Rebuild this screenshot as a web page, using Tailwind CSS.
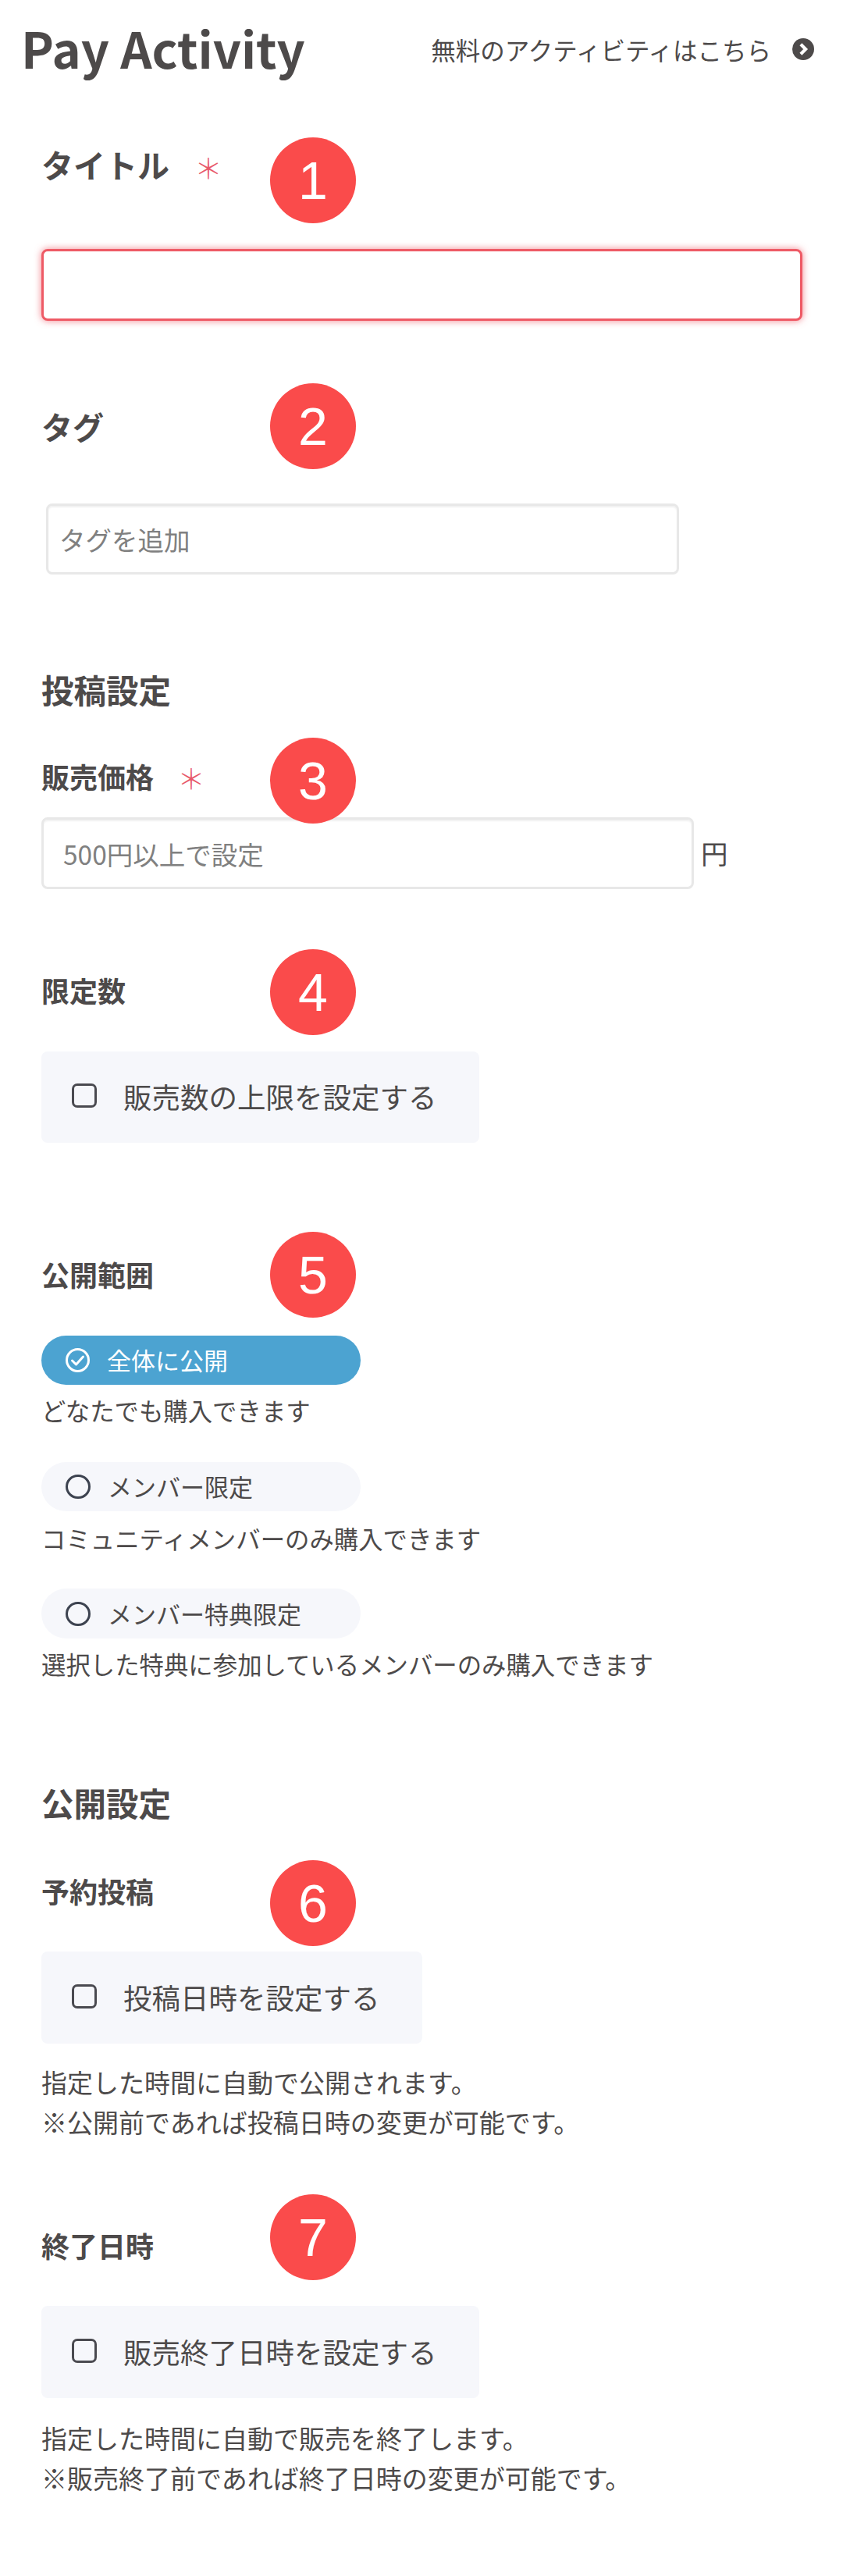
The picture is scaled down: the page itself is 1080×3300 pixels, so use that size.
<!DOCTYPE html>
<html lang="ja">
<head>
  <meta charset="UTF-8" />
  <meta name="viewport" content="width=device-width, initial-scale=1" />
  <title>Pay Activity</title>
  <script src="https://cdn.jsdelivr.net/npm/@tailwindcss/browser@4"></script>
</head>
<body class="bg-white font-['Noto_Sans_CJK_JP','Noto_Sans',sans-serif] text-[#4d4a4a]">
  <div class="w-[1080px] h-[3300px] overflow-hidden">
    <!-- header -->
    <header class="flex justify-between items-start pt-[27px] pl-[27px] pr-[37px] h-[100px]">
      <h1 class="text-[63px] leading-[68px] font-bold">Pay Activity</h1>
      <a href="#" class="flex items-center mt-[14px] text-[31.5px] leading-[44px] font-normal">
        無料のアクティビティはこちら
        <svg class="w-[28px] h-[28px] ml-[27px]" viewBox="0 0 27 27">
          <circle cx="13.5" cy="13.5" r="13.5" fill="#4d4a4a" />
          <path d="M10.5 7.5l6 6-6 6" fill="none" stroke="#fff" stroke-width="4" />
        </svg>
      </a>
    </header>

    <main class="px-[53px]">
      <!-- title -->
      <div class="relative mt-[85px] h-[50px] flex items-center text-[41px] leading-[50px] font-bold">
        タイトル
        <span class="ml-[32px] translate-y-[4px] text-[#e8596a] text-[36px] font-light">＊</span>
        <span class="absolute left-[293px] top-[-9px] z-10 flex items-center justify-center w-[110px] h-[110px] rounded-full bg-[#fa4b4b] text-white text-[68px] font-['Liberation_Sans',sans-serif] font-normal">1</span>
      </div>
      <input class="block mt-[84px] w-[975px] h-[92px] rounded-[8px] border-[3px] border-[#ee5a65] bg-white shadow-[0_0_10px_rgba(238,90,101,0.75)] outline-none" />

      <!-- tag -->
      <div class="relative mt-[110px] h-[50px] flex items-center text-[40px] leading-[50px] font-bold">
        タグ
        <span class="absolute left-[293px] top-[-30px] z-10 flex items-center justify-center w-[110px] h-[110px] rounded-full bg-[#fa4b4b] text-white text-[68px] font-['Liberation_Sans',sans-serif] font-normal">2</span>
      </div>
      <input placeholder="タグを追加" class="block mt-[74px] ml-[6px] w-[811px] h-[91px] px-[14px] rounded-[8px] border-[3px] border-[#e8e8e8] bg-white text-[33.5px] font-normal placeholder:text-[#808080] shadow-[inset_0_2px_2px_rgba(0,0,0,0.06)] outline-none" />

      <!-- post settings -->
      <h2 class="mt-[122px] h-[50px] text-[41.5px] leading-[50px] font-bold">投稿設定</h2>

      <div class="relative mt-[61px] h-[50px] flex items-center text-[36px] leading-[50px] font-bold">
        販売価格
        <span class="ml-[30px] translate-y-[2px] text-[#e8596a] text-[36px] font-light">＊</span>
        <span class="absolute left-[293px] top-[-24px] z-10 flex items-center justify-center w-[110px] h-[110px] rounded-full bg-[#fa4b4b] text-white text-[68px] font-['Liberation_Sans',sans-serif] font-normal">3</span>
      </div>
      <div class="mt-[28px] flex items-center">
        <input placeholder="500円以上で設定" class="block w-[836px] h-[92px] px-[25px] rounded-[8px] border-[3px] border-[#e8e8e8] bg-white text-[33.5px] font-normal placeholder:text-[#808080] shadow-[inset_0_2px_2px_rgba(0,0,0,0.06)] outline-none" />
        <span class="ml-[9px] text-[34.5px] font-normal">円</span>
      </div>

      <div class="relative mt-[104px] h-[50px] flex items-center text-[36px] leading-[50px] font-bold">
        限定数
        <span class="absolute left-[293px] top-[-27px] z-10 flex items-center justify-center w-[110px] h-[110px] rounded-full bg-[#fa4b4b] text-white text-[68px] font-['Liberation_Sans',sans-serif] font-normal">4</span>
      </div>
      <label class="mt-[54px] flex items-center w-[561px] h-[117px] pl-[39px] rounded-[8px] bg-[#f6f7fb]">
        <span class="w-[32px] h-[31px] rounded-[7px] border-[3px] border-[#4a4a50] -translate-y-[2px]"></span>
        <span class="ml-[34px] text-[36.5px] font-normal">販売数の上限を設定する</span>
      </label>

      <!-- visibility -->
      <div class="relative mt-[143px] h-[50px] flex items-center text-[36px] leading-[50px] font-bold">
        公開範囲
        <span class="absolute left-[293px] top-[-29px] z-10 flex items-center justify-center w-[110px] h-[110px] rounded-full bg-[#fa4b4b] text-white text-[68px] font-['Liberation_Sans',sans-serif] font-normal">5</span>
      </div>
      <div class="mt-[54px] flex items-center w-[409px] h-[63px] pl-[31px] rounded-full bg-[#4ca3d1] text-white text-[31px] font-normal">
        <svg class="w-[31px] h-[31px]" viewBox="0 0 31 31" fill="none" stroke="#fff" stroke-width="3">
          <circle cx="15.5" cy="15.5" r="14" />
          <path d="M8.5 16l5 5 9-10" stroke-linecap="round" stroke-linejoin="round" />
        </svg>
        <span class="ml-[22px]">全体に公開</span>
      </div>
      <p class="mt-[11px] h-[44px] text-[31.4px] leading-[44px] font-normal">どなたでも購入できます</p>

      <div class="mt-[44px] flex items-center w-[409px] h-[63px] pl-[31px] rounded-full bg-[#f6f7fb] text-[31px] font-normal">
        <span class="w-[32px] h-[31px] rounded-full border-[3px] border-[#3d4350]"></span>
        <span class="ml-[22px]">メンバー限定</span>
      </div>
      <p class="mt-[13px] h-[44px] text-[31.4px] leading-[44px] font-normal">コミュニティメンバーのみ購入できます</p>

      <div class="mt-[42px] flex items-center w-[409px] h-[64px] pl-[31px] rounded-full bg-[#f6f7fb] text-[31px] font-normal">
        <span class="w-[32px] h-[31px] rounded-full border-[3px] border-[#3d4350]"></span>
        <span class="ml-[22px]">メンバー特典限定</span>
      </div>
      <p class="mt-[11px] h-[44px] text-[31.4px] leading-[44px] font-normal">選択した特典に参加しているメンバーのみ購入できます</p>

      <!-- publish settings -->
      <h2 class="mt-[130px] h-[50px] text-[41.5px] leading-[50px] font-bold">公開設定</h2>

      <div class="relative mt-[63px] h-[50px] flex items-center text-[36px] leading-[50px] font-bold">
        予約投稿
        <span class="absolute left-[293px] top-[-14px] z-10 flex items-center justify-center w-[110px] h-[110px] rounded-full bg-[#fa4b4b] text-white text-[68px] font-['Liberation_Sans',sans-serif] font-normal">6</span>
      </div>
      <label class="mt-[53px] flex items-center w-[488px] h-[118px] pl-[39px] rounded-[8px] bg-[#f6f7fb]">
        <span class="w-[32px] h-[31px] rounded-[7px] border-[3px] border-[#4a4a50] -translate-y-[2px]"></span>
        <span class="ml-[34px] text-[36.5px] font-normal">投稿日時を設定する</span>
      </label>
      <p class="mt-[24px] text-[33px] leading-[51px] font-normal">指定した時間に自動で公開されます。<br />※公開前であれば投稿日時の変更が可能です。</p>

      <div class="relative mt-[107px] h-[50px] flex items-center text-[36px] leading-[50px] font-bold">
        終了日時
        <span class="absolute left-[293px] top-[-40px] z-10 flex items-center justify-center w-[110px] h-[110px] rounded-full bg-[#fa4b4b] text-white text-[68px] font-['Liberation_Sans',sans-serif] font-normal">7</span>
      </div>
      <label class="mt-[53px] flex items-center w-[561px] h-[118px] pl-[39px] rounded-[8px] bg-[#f6f7fb]">
        <span class="w-[32px] h-[31px] rounded-[7px] border-[3px] border-[#4a4a50] -translate-y-[2px]"></span>
        <span class="ml-[34px] text-[36.5px] font-normal">販売終了日時を設定する</span>
      </label>
      <p class="mt-[26px] text-[33px] leading-[51px] font-normal">指定した時間に自動で販売を終了します。<br />※販売終了前であれば終了日時の変更が可能です。</p>
    </main>
  </div>
</body>
</html>
